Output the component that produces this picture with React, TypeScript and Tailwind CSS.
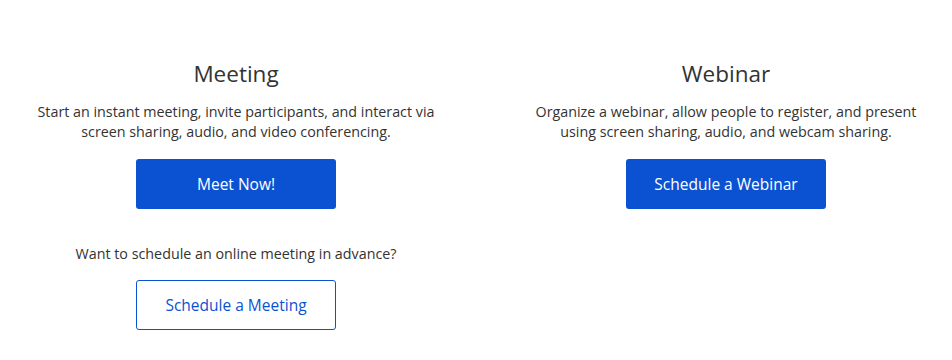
import React from "react";

export default function App() {
  return (
    <div
      className="w-[952px] h-[360px] bg-white text-[#333333] overflow-hidden"
      style={{ fontFamily: "'Open Sans', Lato, sans-serif" }}
    >
      <div className="grid grid-cols-[472px_472px] gap-x-[18px] pt-[59px]">
        <section className="flex flex-col items-center text-center">
          <h2 className="text-[22.5px] leading-[30px] font-normal">Meeting</h2>
          <p className="mt-[13px] text-[14.3px] leading-[20px]">
            Start an instant meeting, invite participants, and interact via
            <br />
            screen sharing, audio, and video conferencing.
          </p>
          <button className="mt-[17px] w-[200px] h-[50px] rounded-[3px] bg-[#0b52d2] text-white text-[15.5px] leading-[20px]">
            Meet Now!
          </button>
          <p className="mt-[35px] text-[14.3px] leading-[20px]">
            Want to schedule an online meeting in advance?
          </p>
          <button className="mt-[16px] w-[200px] h-[50px] rounded-[3px] border border-[#0b52d2] bg-white text-[#0b52d2] text-[15.5px] leading-[20px]">
            Schedule a Meeting
          </button>
        </section>
        <section className="flex flex-col items-center text-center">
          <h2 className="text-[22.5px] leading-[30px] font-normal">Webinar</h2>
          <p className="mt-[13px] text-[14.3px] leading-[20px]">
            Organize a webinar, allow people to register, and present
            <br />
            using screen sharing, audio, and webcam sharing.
          </p>
          <button className="mt-[17px] w-[200px] h-[50px] rounded-[3px] bg-[#0b52d2] text-white text-[15.5px] leading-[20px]">
            Schedule a Webinar
          </button>
        </section>
      </div>
    </div>
  );
}
